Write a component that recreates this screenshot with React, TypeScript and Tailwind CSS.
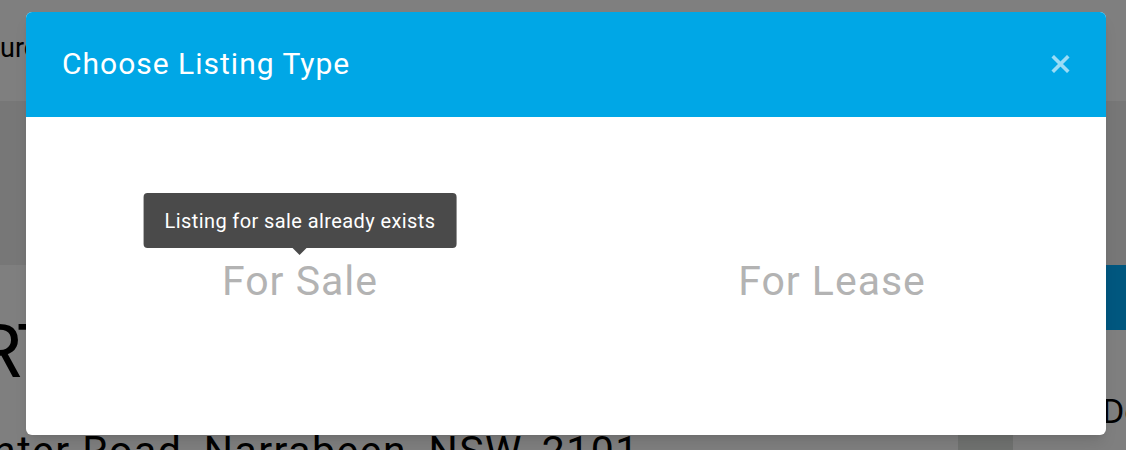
export default function App() {
  return (
    <div
      className="relative w-[1126px] h-[450px] overflow-hidden bg-white"
      style={{ fontFamily: "Roboto, 'Liberation Sans', sans-serif" }}
    >
      {/* Page behind the modal */}
      <div className="flex flex-col w-full">
        <header className="h-[101px] bg-white flex items-center">
          <span className="text-[27px] text-black -mt-[4px]">urce</span>
        </header>
        <div className="h-[164px] bg-[#eeefee]" />
        <div className="flex">
          <div className="flex-1 flex flex-col">
            <div className="h-[50px]" />
            <div className="text-[74px] leading-none text-black -ml-[24px] tracking-tight">RT</div>
            <div className="h-[42px]" />
            <div className="text-[41px] leading-none text-black -ml-[7px] tracking-[1.5px] whitespace-nowrap">nter Road, Narrabeen, NSW, 2101</div>
          </div>
          <div className="w-[20px] flex flex-col">
            <div className="h-[65px] bg-[#00aefe]" />
            <div className="h-[64px]" />
            <div className="text-[34px] leading-none text-black -ml-[4px] whitespace-nowrap">Do</div>
          </div>
        </div>
      </div>
      <div className="absolute left-[958px] top-[435px] w-[55px] h-[20px] bg-[#e0e4e0]" />

      {/* Backdrop */}
      <div className="absolute inset-0 bg-black/50" />

      {/* Modal */}
      <div className="absolute left-[26px] top-[12px] w-[1080px] h-[423px] bg-white rounded-[6px] overflow-hidden shadow-lg flex flex-col">
        <div className="h-[105px] bg-[#00a7e6] flex items-center justify-between pl-[36px] pr-[36px]">
          <h2 className="text-[30px] tracking-[1px] text-white font-normal -mt-[2px]">Choose Listing Type</h2>
          <button className="w-[20px] h-[20px] flex items-center justify-center -mt-[2px]">
            <svg width="19" height="18" viewBox="0 0 19 18">
              <path d="M3 2.5 L16 15.5 M16 2.5 L3 15.5" stroke="#9bdcf6" strokeWidth="3.6" strokeLinecap="square" />
            </svg>
          </button>
        </div>
        <div className="flex-1 grid grid-cols-2 px-[8px] pt-[140px]">
          <div className="flex justify-center">
            <div className="relative">
              <div className="absolute left-1/2 -translate-x-1/2 bottom-[calc(100%+9px)] whitespace-nowrap bg-[#4a4a4a] text-white text-[20px] tracking-[0.4px] rounded-[4px] px-[21px] h-[55px] flex items-center">
                Listing for sale already exists
                <span className="absolute left-1/2 -translate-x-1/2 top-full w-0 h-0 border-l-[7px] border-r-[7px] border-t-[7px] border-l-transparent border-r-transparent border-t-[#4a4a4a]" />
              </div>
              <span className="block text-[41px] tracking-[1px] leading-[48px] text-[#b3b3b3]">For Sale</span>
            </div>
          </div>
          <div className="flex justify-center">
            <span className="block text-[41px] tracking-[1px] leading-[48px] text-[#b3b3b3]">For Lease</span>
          </div>
        </div>
      </div>
    </div>
  );
}
